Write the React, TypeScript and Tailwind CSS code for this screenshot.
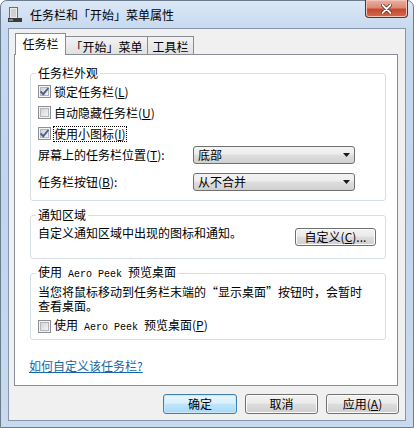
import React from "react";

// Windows 7 "任务栏和「开始」菜单属性" dialog

function CheckBox({ checked }: { checked?: boolean }) {
  return (
    <svg width="13" height="13" viewBox="0 0 13 13" className="shrink-0">
      <defs>
        <linearGradient id="cbFill" x1="0" y1="0" x2="1" y2="1">
          <stop offset="0" stopColor="#cdd1d6" />
          <stop offset="1" stopColor="#f7f7f7" />
        </linearGradient>
      </defs>
      <rect x="0.5" y="0.5" width="12" height="12" fill="#f4f4f4" stroke="#8f8f8f" />
      <rect x="2.5" y="2.5" width="8" height="8" fill="url(#cbFill)" stroke="#b3b7bd" />
      {checked && (
        <path d="M2.6 6.4 L5.2 9.2 L10.4 3" stroke="#4b5f92" strokeWidth="1.9" fill="none" />
      )}
    </svg>
  );
}

function ComboBox({ value }: { value: string }) {
  return (
    <div className="flex h-[18px] w-[162px] items-center justify-between rounded-[3px] border border-[#707070] bg-[linear-gradient(#f4f4f4_0%,#ececec_45%,#dedede_50%,#d0d0d0_100%)] pl-[4px] pr-[4px]">
      <span className="leading-[14px]">{value}</span>
      <svg width="7" height="4" viewBox="0 0 7 4">
        <path d="M0 0 H7 L3.5 4 Z" fill="#1a1a1a" />
      </svg>
    </div>
  );
}

function Button({ children, primary, className = "" }: { children: React.ReactNode; primary?: boolean; className?: string }) {
  return (
    <div
      className={`flex items-center justify-center rounded-[3px] border leading-[14px] ${
        primary
          ? "border-[#3c7fb1] bg-[linear-gradient(#eaf6fd_0%,#d9f0fc_45%,#bee6fd_50%,#a7d9f5_100%)] shadow-[inset_0_0_0_1px_#cbe9f8]"
          : "border-[#707070] bg-[linear-gradient(#f2f2f2_0%,#ebebeb_45%,#dddddd_50%,#cfcfcf_100%)] shadow-[inset_0_0_0_1px_#fcfcfc]"
      } ${className}`}
    >
      {children}
    </div>
  );
}

export default function App() {
  return (
    <div className="h-[428px] w-[414px] bg-white font-['Noto_Sans_CJK_SC',sans-serif] text-[12px] text-black">
      <div className="flex h-[428px] w-[414px] flex-col rounded-t-[7px] border border-[#6b7c8f] bg-[linear-gradient(180deg,#dbe7f6_0px,#c7d9ef_28px,#c2d5ed_200px,#c9daee_428px)]">
        {/* title bar */}
        <div className="flex h-[27px] items-center">
          <svg width="14" height="15" viewBox="0 0 14 15" className="ml-[7px]">
            <rect x="1.5" y="0.5" width="8" height="11" fill="#ececec" stroke="#6e6e6e" />
            <rect x="3" y="2" width="5" height="8" fill="#d0d0d0" />
            <rect x="0" y="11" width="14" height="4" fill="#3b3b3b" />
            <rect x="1" y="12" width="4" height="2" fill="#8a8a8a" />
          </svg>
          <span className="ml-[8px] leading-[14px]">任务栏和「开始」菜单属性</span>
          <div className="-mt-[1px] mr-[5px] ml-auto flex h-[18px] w-[43px] items-center justify-center self-start rounded-b-[4px] border border-t-0 border-[#6e2a1f] bg-[linear-gradient(#eab0a2_0%,#dd8a74_45%,#c8482e_55%,#d4694c_100%)] shadow-[inset_0_0_0_1px_#f2c4b8]">
            <svg width="11" height="10" viewBox="0 0 11 10">
              <path d="M1.5 1 L9.5 9 M9.5 1 L1.5 9" stroke="#5b2419" strokeWidth="3.4" strokeLinecap="round" />
              <path d="M1.5 1 L9.5 9 M9.5 1 L1.5 9" stroke="#ffffff" strokeWidth="1.8" strokeLinecap="round" />
            </svg>
          </div>
        </div>

        {/* client area */}
        <div className="mx-[7px] flex h-[393px] flex-col border border-[#8596ad] bg-[#f0f0f0]">
          {/* tabs */}
          <div className="relative z-10 mt-[4px] ml-[6px] flex h-[22px] items-end">
            <div className="flex h-[22px] w-[51px] items-center justify-center border border-b-0 border-[#898c95] bg-white pb-[1px] leading-[14px]">
              任务栏
            </div>
            <div className="mb-[1px] -ml-[1px] flex h-[18px] w-[83px] items-center justify-center border border-b-0 border-[#898c95] bg-[linear-gradient(#f3f3f3,#e0e0e0)] pt-[2px] leading-[14px]">
              「开始」菜单
            </div>
            <div className="mb-[1px] -ml-[1px] flex h-[18px] w-[47px] items-center justify-center border border-b-0 border-[#898c95] bg-[linear-gradient(#f3f3f3,#e0e0e0)] pt-[2px] leading-[14px]">
              工具栏
            </div>
          </div>

          {/* tab panel */}
          <div className="-mt-[1px] ml-[5px] flex h-[332px] w-[384px] flex-col border border-[#898c95] bg-white pt-[11px]">
            {/* 任务栏外观 */}
            <fieldset className="ml-[15px] w-[356px] rounded-[3px] border border-[#d5dfe5] px-[7px] pb-[8px]">
              <legend className="-ml-[2px] px-[2px] leading-[14px]">任务栏外观</legend>
              <div className="pt-[1px]">
                <div className="flex h-[21px] items-center gap-[3px]">
                  <CheckBox checked />
                  <span className="leading-[14px]">锁定任务栏(<u>L</u>)</span>
                </div>
                <div className="flex h-[21px] items-center gap-[3px]">
                  <CheckBox />
                  <span className="leading-[14px]">自动隐藏任务栏(<u>U</u>)</span>
                </div>
                <div className="flex h-[21px] items-center gap-[3px]">
                  <CheckBox checked />
                  <span className="leading-[14px] outline-1 outline-black outline-dotted">使用小图标(<u>I</u>)</span>
                </div>
              </div>
              <div className="mt-[1px] flex h-[20px] items-center">
                <span className="w-[155px] leading-[14px]">屏幕上的任务栏位置(<u>T</u>):</span>
                <ComboBox value="底部" />
              </div>
              <div className="mt-[7px] flex h-[20px] items-center">
                <span className="w-[155px] leading-[14px]">任务栏按钮(<u>B</u>):</span>
                <ComboBox value="从不合并" />
              </div>
            </fieldset>

            {/* 通知区域 */}
            <fieldset className="mt-[7px] ml-[15px] w-[356px] rounded-[3px] border border-[#d5dfe5] pr-[9px] pb-[12px] pl-[7px]">
              <legend className="-ml-[2px] px-[2px] leading-[14px]">通知区域</legend>
              <div className="flex h-[24px] items-start">
                <span className="mt-[4px] leading-[14px]">自定义通知区域中出现的图标和通知。</span>
                <Button className="mt-[6px] ml-auto h-[18px] w-[81px]">
                  自定义(<u>C</u>)...
                </Button>
              </div>
            </fieldset>

            {/* Aero Peek */}
            <fieldset className="mt-[6px] ml-[15px] w-[356px] rounded-[3px] border border-[#d5dfe5] px-[7px] pb-[3px]">
              <legend className="-ml-[2px] px-[2px] leading-[14px]">
                使用<span className="font-['Liberation_Mono',monospace] text-[10px]"> Aero Peek </span>预览桌面
              </legend>
              <p className="mt-[3px] w-[332px] leading-[14px]">
                当您将鼠标移动到任务栏末端的“显示桌面”按钮时，会暂时查看桌面。
              </p>
              <div className="mt-[3px] flex h-[20px] items-center gap-[3px]">
                <CheckBox />
                <span className="leading-[14px]">
                  使用<span className="font-['Liberation_Mono',monospace] text-[10px]"> Aero Peek </span>预览桌面(<u>P</u>)
                </span>
              </div>
            </fieldset>

            <a className="mt-[19px] ml-[14px] w-fit leading-[14px] text-[#1766a8] underline">如何自定义该任务栏?</a>
          </div>

          {/* dialog buttons */}
          <div className="mt-[8px] mr-[6px] flex justify-end gap-[8px]">
            <Button primary className="h-[20px] w-[74px]">
              确定
            </Button>
            <Button className="h-[20px] w-[73px]">取消</Button>
            <Button className="h-[20px] w-[73px]">
              应用(<u>A</u>)
            </Button>
          </div>
        </div>
      </div>
    </div>
  );
}
